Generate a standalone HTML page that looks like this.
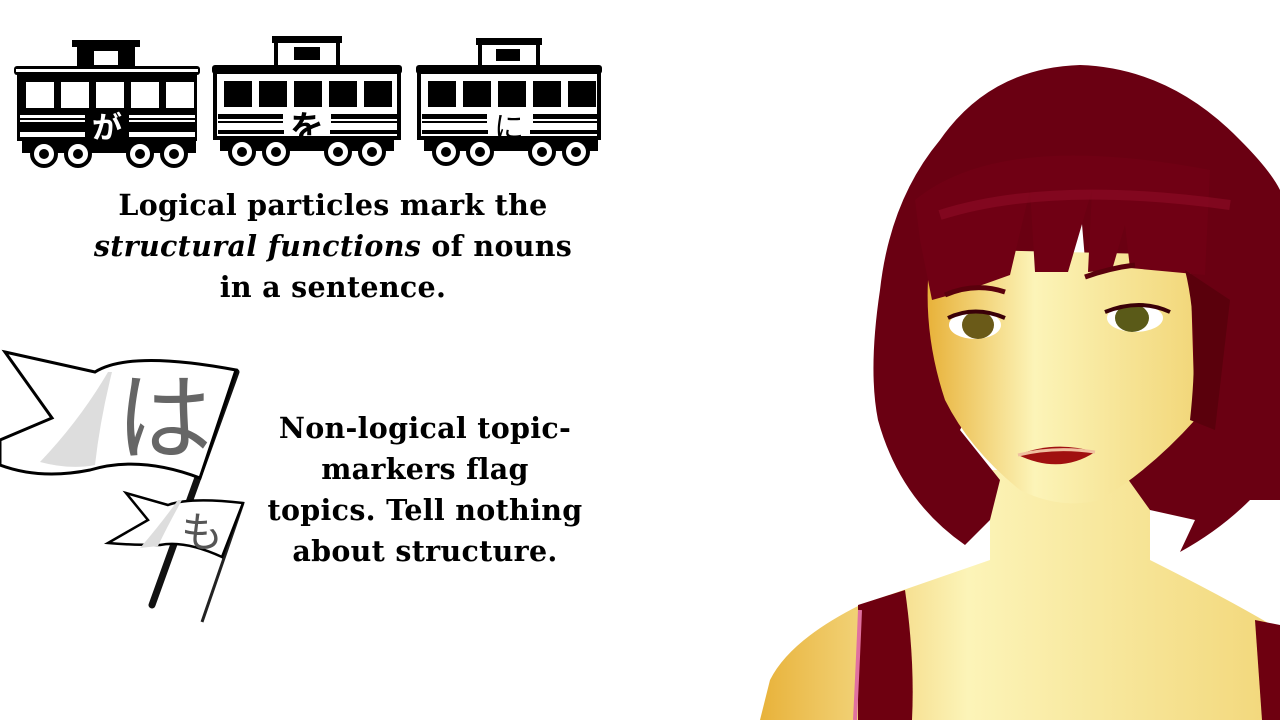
<!DOCTYPE html>
<html><head><meta charset="utf-8"><style>
html,body{margin:0;padding:0;background:#fff;width:1280px;height:720px;overflow:hidden;position:relative}
.t{position:absolute;font-family:"DejaVu Serif","Liberation Serif",serif;font-weight:bold;font-size:28.5px;line-height:41px;text-align:center;color:#000;white-space:nowrap;letter-spacing:0.3px}
svg{position:absolute;left:0;top:0}
</style></head><body>
<svg width="1280" height="720" viewBox="0 0 1280 720">
<defs>
<g id="wheels">
<rect x="8" y="98" width="174" height="15" fill="#000"/>
<g fill="#fff" stroke="#000" stroke-width="4"><circle cx="30" cy="114" r="12"/><circle cx="64" cy="114" r="12"/><circle cx="126" cy="114" r="12"/><circle cx="160" cy="114" r="12"/></g>
<g fill="#000"><circle cx="30" cy="114" r="5"/><circle cx="64" cy="114" r="5"/><circle cx="126" cy="114" r="5"/><circle cx="160" cy="114" r="5"/></g>
</g>
</defs>
<g transform="translate(14,40)">
<rect x="58" y="0" width="68" height="7" fill="#000"/>
<rect x="63" y="5" width="58" height="24" fill="#000"/>
<rect x="80" y="11" width="24" height="14" fill="#fff"/>
<rect x="0" y="26" width="186" height="9" rx="3" fill="#000"/>
<rect x="2" y="29" width="182" height="3" fill="#fff"/>
<rect x="3" y="33" width="180" height="68" fill="#000"/>
<g fill="#fff"><rect x="12" y="42" width="28" height="26"/><rect x="47" y="42" width="28" height="26"/><rect x="82" y="42" width="28" height="26"/><rect x="117" y="42" width="28" height="26"/><rect x="152" y="42" width="28" height="26"/>
<rect x="6" y="75" width="65" height="3"/><rect x="6" y="80" width="65" height="2"/><rect x="115" y="75" width="66" height="3"/><rect x="115" y="80" width="66" height="2"/>
<rect x="6" y="92" width="65" height="5"/><rect x="115" y="92" width="66" height="5"/></g>
<use href="#wheels"/>
<text x="93" y="98" font-family="Noto Sans CJK JP,sans-serif" font-weight="bold" font-size="30" fill="#fff" text-anchor="middle">が</text>
</g>
<g transform="translate(212,36)">
<rect x="60" y="0" width="70" height="7" fill="#000"/>
<rect x="64" y="5" width="62" height="26" fill="#fff" stroke="#000" stroke-width="4"/>
<rect x="82" y="11" width="26" height="13" fill="#000"/>
<rect x="0" y="29" width="190" height="9" rx="3" fill="#000"/>
<rect x="3" y="36" width="184" height="66" fill="#fff" stroke="#000" stroke-width="4"/>
<g fill="#000"><rect x="12" y="45" width="28" height="26"/><rect x="47" y="45" width="28" height="26"/><rect x="82" y="45" width="28" height="26"/><rect x="117" y="45" width="28" height="26"/><rect x="152" y="45" width="28" height="26"/>
<rect x="6" y="78" width="65" height="5"/><rect x="6" y="85" width="65" height="2"/><rect x="119" y="78" width="66" height="5"/><rect x="119" y="85" width="66" height="2"/>
<rect x="6" y="94" width="180" height="4"/></g>
<g transform="translate(0,2)"><use href="#wheels"/></g>
<rect x="72" y="88" width="46" height="12" fill="#fff"/>
<text x="95" y="104" font-family="Noto Sans CJK JP,sans-serif" font-weight="bold" font-size="34" fill="#000" text-anchor="middle">を</text>
</g>
<g transform="translate(416,38)">
<rect x="60" y="0" width="66" height="7" fill="#000"/>
<rect x="64" y="5" width="58" height="24" fill="#fff" stroke="#000" stroke-width="4"/>
<rect x="80" y="11" width="24" height="12" fill="#000"/>
<rect x="0" y="27" width="186" height="9" rx="3" fill="#000"/>
<rect x="3" y="34" width="180" height="66" fill="#fff" stroke="#000" stroke-width="4"/>
<g fill="#000"><rect x="12" y="43" width="28" height="26"/><rect x="47" y="43" width="28" height="26"/><rect x="82" y="43" width="28" height="26"/><rect x="117" y="43" width="28" height="26"/><rect x="152" y="43" width="28" height="26"/>
<rect x="6" y="76" width="65" height="5"/><rect x="6" y="83" width="65" height="2"/><rect x="117" y="76" width="64" height="5"/><rect x="117" y="83" width="64" height="2"/>
<rect x="6" y="92" width="176" height="4"/></g>
<use href="#wheels"/>
<rect x="72" y="86" width="42" height="12" fill="#fff"/>
<text x="93" y="100" font-family="Noto Sans CJK JP,sans-serif" font-size="30" fill="#000" text-anchor="middle">に</text>
</g>

<line x1="236" y1="372" x2="152" y2="605" stroke="#111" stroke-width="7" stroke-linecap="round"/>
<path d="M5,352 L95,372 Q130,350 236,370 L200,478 Q140,455 90,470 Q40,480 0,465 L0,440 L52,418 Z" fill="#fff" stroke="#000" stroke-width="3"/>
<path d="M108,372 Q80,420 40,462 Q70,470 95,465 Q100,420 112,372Z" fill="#ddd"/>
<text x="164" y="452" font-family="Noto Sans CJK JP,sans-serif" font-size="96" fill="#666" text-anchor="middle">は</text>
<line x1="243" y1="503" x2="202" y2="622" stroke="#222" stroke-width="3"/>
<path d="M126,493 L168,505 Q190,497 243,503 L222,557 Q185,540 160,545 Q130,545 108,543 L148,520 Z" fill="#fff" stroke="#000" stroke-width="2.5"/>
<path d="M178,500 Q160,525 140,548 L158,546 Q168,525 182,500Z" fill="#ddd"/>
<text x="202" y="547" font-family="Noto Sans CJK JP,sans-serif" font-size="42" fill="#555" text-anchor="middle">も</text>

<defs>
<linearGradient id="skin" x1="0" y1="0" x2="1" y2="0"><stop offset="0" stop-color="#e8b23a"/><stop offset=".4" stop-color="#fcf4b8"/><stop offset="1" stop-color="#f2d77a"/></linearGradient>
</defs>
<path d="M760,720 L770,680 Q790,640 860,605 L990,560 L990,470 L1150,470 L1150,560 Q1230,600 1280,630 L1280,720 Z" fill="url(#skin)"/>
<path d="M858,605 L905,590 Q915,660 912,720 L858,720 Z" fill="#6e0010"/>
<path d="M860,610 Q858,660 855,720" stroke="#e070a0" stroke-width="4" fill="none"/>
<path d="M1255,620 L1280,625 L1280,720 L1262,720 Z" fill="#6e0010"/>
<path d="M1080,65 Q1170,68 1240,140 Q1270,170 1280,190 L1280,500 L1250,500 Q1220,530 1180,552 L1195,520 L1150,510 L1100,440 L1080,200 Z" fill="#6a0012"/>
<path d="M1080,65 Q990,68 940,140 Q890,200 880,290 Q868,370 878,420 Q900,500 965,545 L990,520 L1000,480 L960,430 L1080,200 Z" fill="#6a0012"/>
<path d="M928,280 Q935,240 980,250 L1190,255 L1195,420 Q1150,470 1100,500 Q1060,510 1020,490 Q970,450 945,400 Q925,340 928,280 Z" fill="url(#skin)"/>
<path d="M915,200 Q1000,130 1210,170 L1205,275 L1130,268 L1125,225 L1112,270 L1088,272 L1092,190 L1068,272 L1035,272 L1030,190 L1010,275 L968,290 L932,300 L920,240 Z" fill="#700014"/>
<path d="M940,215 Q1050,180 1230,205" stroke="#8a0a24" stroke-width="10" fill="none" opacity=".7"/>
<path d="M1185,270 Q1200,330 1190,420 L1215,430 L1230,300 Z" fill="#5a000c"/>
<ellipse cx="975" cy="325" rx="26" ry="14" fill="#fff"/><ellipse cx="978" cy="325" rx="16" ry="14" fill="#6a5a18"/>
<ellipse cx="1135" cy="318" rx="28" ry="14" fill="#fff"/><ellipse cx="1132" cy="318" rx="17" ry="14" fill="#5a5a18"/>
<path d="M948,318 Q975,305 1005,318" stroke="#3a0008" stroke-width="4" fill="none"/>
<path d="M1105,312 Q1140,298 1170,312" stroke="#3a0008" stroke-width="4" fill="none"/>
<path d="M945,295 Q975,282 1005,292" stroke="#5a000c" stroke-width="5" fill="none"/>
<path d="M1085,277 Q1110,268 1135,265" stroke="#5a000c" stroke-width="5" fill="none"/>
<path d="M1018,455 Q1055,440 1095,452 Q1060,475 1018,455Z" fill="#a01010"/>
<path d="M1018,455 Q1055,446 1095,452" stroke="#f0c0a0" stroke-width="3" fill="none"/>
</svg>

<div class="t" style="left:83px;top:185px;width:500px">Logical particles mark the<br><i>structural functions</i> of nouns<br>in a sentence.</div>
<div class="t" style="left:205px;top:408px;width:440px">Non-logical topic-<br>markers flag<br>topics. Tell nothing<br>about structure.</div>
</body></html>
